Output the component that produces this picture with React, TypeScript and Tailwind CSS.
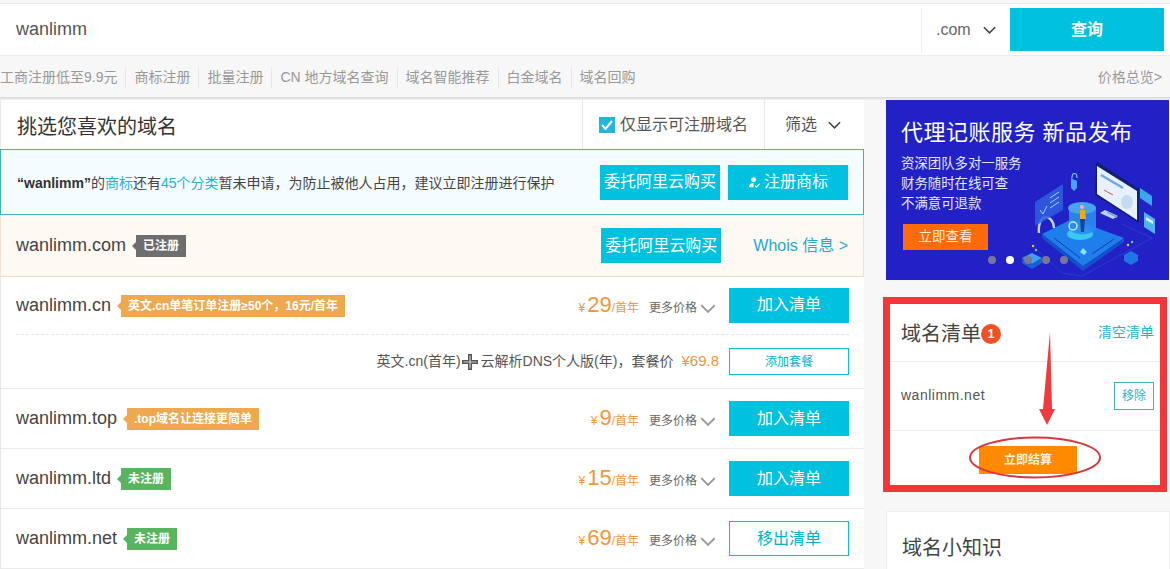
import React from 'react';

const font = { fontFamily: '"Liberation Sans", "Noto Sans CJK SC", Arial, sans-serif' };

const Chevron = ({ className }: { className: string }) => (
  <svg viewBox="0 0 14 8" className={className} fill="none" stroke="currentColor" strokeWidth="1.7">
    <path d="M1 1l6 6 6-6" />
  </svg>
);

const Tag = ({ text, color }: { text: string; color: string }) => (
  <span className="ml-[6px] flex items-center">
    <span
      className={`h-0 w-0 border-y-[4px] border-r-[4px] border-y-transparent ${
        color === 'orange' ? 'border-r-[#eea84e]' : color === 'green' ? 'border-r-[#58b45e]' : 'border-r-[#6e6e6e]'
      }`}
    />
    <span
      className={`flex h-[22px] items-center px-[7px] text-[12px] font-bold text-white ${
        color === 'orange' ? 'bg-[#eea84e]' : color === 'green' ? 'bg-[#58b45e]' : 'bg-[#6e6e6e]'
      }`}
    >
      {text}
    </span>
  </span>
);

const Price = ({ value }: { value: string }) => (
  <div className="flex items-baseline text-[#f0963c]">
    <span className="mr-[2px] text-[12px]">¥</span>
    <span className="text-[22px] leading-none">{value}</span>
    <span className="text-[12px]">/首年</span>
  </div>
);

const MorePrice = () => (
  <>
    <span className="mt-[4px] ml-[10px] text-[12px] text-[#666]">更多价格</span>
    <Chevron className="mt-[6px] ml-[3px] h-[9px] w-[16px] text-[#999]" />
  </>
);

const DomainRow = ({
  name,
  tag,
  tagColor,
  price,
  inCart,
}: {
  name: string;
  tag: string;
  tagColor: string;
  price: string;
  inCart?: boolean;
}) => (
  <div className="flex h-[60px] items-center border-b border-[#ebebeb] pr-[15px] pl-[15px]">
    <span className="text-[18px] text-[#444]">{name}</span>
    <Tag text={tag} color={tagColor} />
    <div className="ml-auto flex items-center">
      <Price value={price} />
      <MorePrice />
      <button
        className={
          inCart
            ? 'ml-[13px] h-[35px] w-[120px] border border-[#00c1de] bg-white text-[16px] text-[#00b3cc]'
            : 'ml-[13px] h-[35px] w-[120px] bg-[#00c1de] text-[16px] text-white'
        }
      >
        {inCart ? '移出清单' : '加入清单'}
      </button>
    </div>
  </div>
);

const links = ['工商注册低至9.9元', '商标注册', '批量注册', 'CN 地方域名查询', '域名智能推荐', '白金域名', '域名回购'];

const Illustration = () => (
  <svg viewBox="0 0 150 130" className="absolute top-[50px] left-[134px] h-[130px] w-[150px]">
    <path d="M12 95l30 28 20 3 70-38-30-14" fill="none" stroke="#2b52dc" strokeWidth="0.6" />
    {/* platform */}
    <path d="M22 84l41 32 41-28v4l-41 29-41-33z" fill="#1450c8" />
    <path d="M22 84l30-15 52 19-41 28z" fill="#1e7fec" />
    <path d="M34 88l26 20M72 104l22-15" stroke="#0d3eb0" strokeWidth="1" />
    <path d="M60 102l3-4 4 4-3 3z" fill="#8fe0ff" />
    {/* pipe */}
    <path d="M19 83c-2-20 14-20 15-5" fill="none" stroke="#b8d8f8" strokeWidth="2.4" />
    {/* cylinder */}
    <ellipse cx="60" cy="84" rx="13" ry="6" fill="#38c8f0" />
    <path d="M49 58h27v21c-5 7-22 7-27 0z" fill="#2b8cf0" opacity="0.9" />
    <ellipse cx="62" cy="58" rx="14" ry="6" fill="#45a4f4" />
    <circle cx="53" cy="76" r="4" fill="none" stroke="#bfeeff" strokeWidth="1.5" />
    {/* person */}
    <circle cx="62" cy="57" r="2" fill="#f5b48c" />
    <path d="M60 60h5l1 9h-6z" fill="#f5a623" />
    <path d="M60 69h5l-1 13h-3z" fill="#14469c" />
    {/* monitor */}
    <path d="M76 11l43 28v34L75 45z" fill="#10206e" />
    <path d="M77 16l40 25v29L77 44z" fill="#e8f0fb" />
    <path d="M81 25l22 13" stroke="#6aa8e8" strokeWidth="2.4" />
    <path d="M84 40l9 5" stroke="#c85a5a" strokeWidth="1" />
    <ellipse cx="107" cy="52" rx="6" ry="7" fill="#c2dcf2" />
    <path d="M85 60l13 6-5 3-13-6z" fill="#bcd4f4" />
    <path d="M97 68l-10-5 0-2 10 5z" fill="#7ea4e8" />
    {/* side cards */}
    <path d="M15 52l28-18v26L15 76z" fill="#2f5fe0" opacity="0.85" />
    <path d="M30 48l9-6M30 53l9-6M30 58l9-6" stroke="#a8d4f8" strokeWidth="1" />
    <path d="M20 60l3 4 4-8" stroke="#cfe8ff" strokeWidth="0.8" fill="none" />
    <path d="M120 38l12 8v10l-12-8z" fill="#3aa6ee" />
    <path d="M124 62l11 7v15l-11-7z" fill="#4cb4f0" />
    <path d="M126 67l7 4v3l-7-4z" fill="#dff2ff" />
    {/* lock */}
    <path d="M51 28l6 3v7l-3 3-3-3z" fill="#4aa0f2" />
    <path d="M52 28c0-6 5-6 5 0" fill="none" stroke="#7ec2fa" strokeWidth="1.2" />
    {/* little boxes */}
    <path d="M2 108l10-5 10 5-10 6z" fill="#3fa0f0" />
    <path d="M2 108v5l10 6v-5zM22 108v5l-10 6v-5z" fill="#1a5fd0" />
    <path d="M104 105l7-4 7 4v6l-7 4-7-4z" fill="#1f74e6" />
    <circle cx="108" cy="95" r="1.2" fill="#f5c242" />
    <circle cx="112" cy="92" r="1.2" fill="#5fd68a" />
    <circle cx="13" cy="96" r="1.2" fill="#f5c242" />
    <circle cx="16" cy="100" r="1.2" fill="#5fd68a" />
  </svg>
);

const App: React.FC = () => {
  return (
    <div className="h-[569px] w-[1170px] overflow-hidden bg-[#f7f7f7] pt-[3px]" style={font}>
      {/* search */}
      <div className="flex h-[53px] items-center border-y border-[#ebebeb] bg-white pr-[6px] pl-[16px]">
        <span className="flex-1 text-[18px] text-[#555]">wanlimm</span>
        <div className="flex h-[44px] w-[89px] items-center border-l border-[#eee] pl-[14px]">
          <span className="text-[16px] text-[#666]">.com</span>
          <Chevron className="ml-[12px] h-[8px] w-[13px] text-[#444]" />
        </div>
        <button className="h-[43px] w-[154px] bg-[#00c1de] text-[16px] font-bold text-white">查询</button>
      </div>

      {/* links */}
      <div className="flex h-[41px] items-center pt-[1px] pr-[8px] text-[14px] text-[#999]">
        {links.map((l, i) => (
          <React.Fragment key={l}>
            {i > 0 && <span className="mx-[8px] h-[21px] w-px bg-[#e6e6e6]" />}
            <span>{l}</span>
          </React.Fragment>
        ))}
        <span className="ml-auto">价格总览&gt;</span>
      </div>

      <div className="h-[3px] bg-gradient-to-b from-[#d8d8d8] to-[#f4f4f4]" />

      <div className="flex">
        {/* left column */}
        <div className="w-[864px] shrink-0 border-l border-[#e8e8e8] bg-white">
          <div className="flex h-[49px] items-center">
            <h2 className="flex-1 pt-[5px] pl-[16px] text-[20px] font-normal text-[#333]">挑选您喜欢的域名</h2>
            <div className="flex h-full w-[182px] items-center border-l border-[#e8e8e8] pl-[16px]">
              <span className="flex h-[16px] w-[16px] items-center justify-center bg-[#22b6dc]">
                <svg viewBox="0 0 16 16" className="h-[16px] w-[16px]" fill="none" stroke="#fff" strokeWidth="2">
                  <path d="M3 8l3.5 4L13 4" />
                </svg>
              </span>
              <span className="ml-[5px] text-[16px] text-[#555]">仅显示可注册域名</span>
            </div>
            <div className="flex h-full w-[100px] items-center border-l border-[#e8e8e8] pl-[20px]">
              <span className="text-[16px] text-[#555]">筛选</span>
              <Chevron className="ml-[11px] h-[8px] w-[13px] text-[#444]" />
            </div>
          </div>

          {/* trademark notice */}
          <div className="-ml-px flex h-[66px] items-center border border-[#3db4c2] bg-[#f5fcff] pr-[15px] pl-[16px]">
            <p className="flex-1 pt-[2px] text-[14px] text-[#444]">
              <b className="text-[#333]">“wanlimm”</b>的<span className="text-[#22b6cc]">商标</span>还有
              <span className="text-[#22b6cc]">45个分类</span>暂未申请，为防止被他人占用，建议立即注册进行保护
            </p>
            <button className="h-[35px] w-[120px] bg-[#00c1de] text-[16px] text-white">委托阿里云购买</button>
            <button className="ml-[8px] flex h-[35px] w-[120px] items-center justify-center bg-[#00c1de] text-[16px] text-white">
              <svg viewBox="0 0 14 14" className="mr-[3px] h-[13px] w-[13px]" fill="#fff">
                <circle cx="6" cy="4" r="2.6" />
                <path d="M1 12c0-3 2-4.5 5-4.5V12z" />
                <path d="M7.5 10.5l1.5 1.5 3.5-3.5" fill="none" stroke="#fff" strokeWidth="1.2" />
              </svg>
              注册商标
            </button>
          </div>

          {/* registered */}
          <div className="-ml-px flex h-[62px] items-center border-x border-b border-x-[#f3e2d2] border-b-[#eed9c4] bg-[#fff9f3] pr-[15px] pl-[15px]">
            <span className="text-[18px] text-[#444]">wanlimm.com</span>
            <Tag text="已注册" color="gray" />
            <button className="ml-auto h-[35px] w-[120px] bg-[#00c1de] text-[16px] text-white">委托阿里云购买</button>
            <span className="ml-[32px] text-[16px] text-[#22aacc]">Whois 信息 &gt;</span>
          </div>

          {/* .cn with package */}
          <div className="border-b border-[#ebebeb] px-[15px]">
            <div className="flex h-[58px] items-center border-b border-dashed border-[#e6e6e6]">
              <span className="text-[18px] text-[#444]">wanlimm.cn</span>
              <Tag text="英文.cn单笔订单注册≥50个，16元/首年" color="orange" />
              <div className="ml-auto flex items-center">
                <Price value="29" />
                <MorePrice />
                <button className="mb-[1px] ml-[13px] h-[35px] w-[120px] bg-[#00c1de] text-[16px] text-white">加入清单</button>
              </div>
            </div>
            <div className="flex h-[53px] items-center justify-end">
              <span className="text-[14px] text-[#555]">英文.cn(首年)</span>
              <svg viewBox="0 0 16 16" className="mr-[3px] ml-[1px] h-[16px] w-[16px]">
                <path d="M6 0h4v6h6v4h-6v6H6v-6H0V6h6z" fill="#555" />
                <path d="M7.4 1.5h1.2v6h6v1H8.6v6H7.4v-6h-6v-1h6z" fill="#ccc" />
              </svg>
              <span className="text-[14px] text-[#555]">云解析DNS个人版(年)，套餐价</span>
              <span className="ml-[8px] text-[15px] text-[#f0963c]">¥69.8</span>
              <button className="ml-[10px] h-[27px] w-[120px] border border-[#00c1de] bg-white text-[12px] text-[#00b3cc]">
                添加套餐
              </button>
            </div>
          </div>

          <DomainRow name="wanlimm.top" tag=".top域名让连接更简单" tagColor="orange" price="9" />
          <DomainRow name="wanlimm.ltd" tag="未注册" tagColor="green" price="15" />
          <DomainRow name="wanlimm.net" tag="未注册" tagColor="green" price="69" inCart />
        </div>

        {/* right column */}
        <div className="ml-[19px] w-[287px] shrink-0">
          {/* banner */}
          <div className="relative ml-[3px] h-[180px] w-[283px] bg-[#2121c6] pt-[20px] pl-[15px] text-white">
            <Illustration />
            <div className="text-[22px] leading-[26px] tracking-[0.5px]">代理记账服务 新品发布</div>
            <div className="mt-[8px] text-[13.4px] leading-[20px] text-[#e4e6fa]">
              <div>资深团队多对一服务</div>
              <div>财务随时在线可查</div>
              <div>不满意可退款</div>
            </div>
            <div className="relative mt-[10px] ml-[2px] flex h-[26px] w-[85px] items-center justify-center bg-[#ff6a0a] text-[13.5px] text-[#ffe9d8]">
              立即查看
            </div>
            <div className="absolute top-[156px] left-[102px] flex gap-[10px]">
              <span className="h-[8px] w-[8px] rounded-full bg-[#77779a]" />
              <span className="h-[8px] w-[8px] rounded-full bg-white" />
              <span className="h-[8px] w-[8px] rounded-full bg-[#77779a]" />
              <span className="h-[8px] w-[8px] rounded-full bg-[#77779a]" />
              <span className="h-[8px] w-[8px] rounded-full bg-[#77779a]" />
            </div>
          </div>

          {/* cart with red annotation */}
          <div className="relative mt-[17px] h-[195px] w-[284px] border-[7px] border-[#f0383c] bg-white">
            <div className="flex h-[58px] items-center border-b border-[#ececec] pr-[6px] pl-[11px]">
              <span className="mt-[2px] text-[20px] text-[#444]">域名清单</span>
              <span className="mt-[2px] flex h-[20px] w-[20px] items-center justify-center rounded-full bg-[#f25022] text-[12px] font-bold text-white">
                1
              </span>
              <span className="ml-auto text-[14px] text-[#22b6cc]">清空清单</span>
            </div>
            <div className="flex h-[69px] items-center border-b border-[#ececec] pr-[6px] pl-[11px]">
              <span className="mb-[2px] text-[14px] tracking-[0.5px] text-[#555]">wanlimm.net</span>
              <button className="ml-auto h-[28px] w-[40px] border border-[#3db4c2] text-[12px] text-[#22b6cc]">移除</button>
            </div>
            <div className="flex justify-center pt-[15px]">
              <button className="ml-[6px] h-[28px] w-[98px] bg-[#ff8a00] text-[12px] font-bold text-[#fff3dc]">立即结算</button>
            </div>
            <svg viewBox="0 0 270 181" className="absolute top-0 left-0 h-[181px] w-[270px]" fill="none">
              <path d="M160 28l2 77h3l-8 16-8-16h4z" fill="#ef3a3e" />
              <ellipse cx="145" cy="153.5" rx="65" ry="20" stroke="#d8383c" strokeWidth="2" />
            </svg>
          </div>

          {/* tips */}
          <div className="mt-[19px] ml-[3px] h-[80px] w-[284px] border border-[#eee] bg-white pt-[21px] pl-[15px]">
            <span className="text-[20px] text-[#444]">域名小知识</span>
          </div>
        </div>
      </div>
    </div>
  );
};

export default App;
